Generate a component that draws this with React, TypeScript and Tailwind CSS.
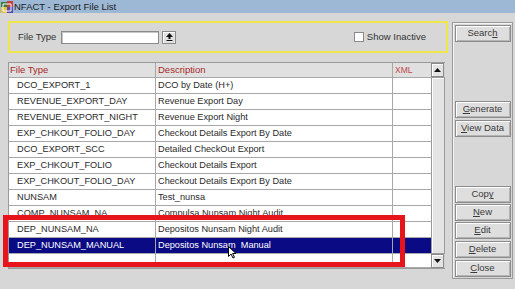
import React from 'react';

const rows = [
  { type: 'DCO_EXPORT_1', desc: 'DCO by Date (H+)' },
  { type: 'REVENUE_EXPORT_DAY', desc: 'Revenue Export Day' },
  { type: 'REVENUE_EXPORT_NIGHT', desc: 'Revenue Export Night' },
  { type: 'EXP_CHKOUT_FOLIO_DAY', desc: 'Checkout Details Export By Date' },
  { type: 'DCO_EXPORT_SCC', desc: 'Detailed CheckOut Export' },
  { type: 'EXP_CHKOUT_FOLIO', desc: 'Checkout Details Export' },
  { type: 'EXP_CHKOUT_FOLIO_DAY', desc: 'Checkout Details Export By Date' },
  { type: 'NUNSAM', desc: 'Test_nunsa' },
  { type: 'COMP_NUNSAM_NA', desc: 'Compulsa Nunsam Night Audit' },
  { type: 'DEP_NUNSAM_NA', desc: 'Depositos Nunsam Night Audit' },
  { type: 'DEP_NUNSAM_MANUAL', desc: 'Depositos Nunsam  Manual', selected: true },
  { type: '', desc: '' },
];

function WinButton({ pre, key1, post, className = '' }: { pre?: string; key1: string; post?: string; className?: string }) {
  return (
    <div
      className={
        'h-[17px] w-[56px] bg-[#dedede] border border-[#8c8c8c] shadow-[inset_1px_1px_0_#ffffff,inset_-1px_-1px_0_#b4b4b4] flex items-center justify-center text-[9.5px] text-[#3a3a3a] ' +
        className
      }
    >
      <span>
        {pre}
        <u>{key1}</u>
        {post}
      </span>
    </div>
  );
}

function ArrowBox({ dir }: { dir: 'up' | 'down' }) {
  return (
    <div className="h-[14px] w-[13px] bg-[#e4e4e4] border border-[#8c8c8c] shadow-[inset_1px_1px_0_#ffffff] flex items-center justify-center">
      <svg width="7" height="4" viewBox="0 0 7 4">
        {dir === 'up' ? <polygon points="0,4 7,4 3.5,0" fill="#111" /> : <polygon points="0,0 7,0 3.5,4" fill="#111" />}
      </svg>
    </div>
  );
}

export default function App() {
  return (
    <div
      className="relative w-[515px] h-[289px] overflow-hidden bg-[#d7d7d7] text-[#2a2a2a]"
      style={{ fontFamily: '"Liberation Sans", Arial, sans-serif' }}
    >
      {/* Title bar */}
      <div className="h-[13px] bg-[#9db8d4] flex items-center">
        <svg width="13" height="12" viewBox="0 0 13 12" className="ml-[1px]">
          <rect x="0" y="1" width="6" height="5" fill="#3a7a3a" />
          <rect x="6" y="0" width="6" height="6" fill="#c84040" />
          <rect x="0" y="6" width="6" height="6" fill="#e8c040" />
          <rect x="6" y="6" width="6" height="6" fill="#5a4ab0" />
          <path d="M2 3 L10 3 L10 10 L2 10 Z" fill="none" stroke="#ffffff" strokeWidth="1" />
        </svg>
        <span className="text-[9.5px] text-[#1c1c1c] leading-none">NFACT - Export File List</span>
      </div>

      <div className="flex">
        {/* Left area */}
        <div className="ml-[8px] mt-[8px] w-[440px]">
          {/* Filter box */}
          <div className="h-[32px] border-[2.5px] border-[#efe64c] flex items-center">
            <span className="ml-[8px] text-[9.5px] text-[#333]">File Type</span>
            <div className="ml-[5px] h-[13px] w-[98px] bg-white border border-[#8a8a8a] shadow-[inset_1px_1px_0_#c8c8c8]" />
            <div className="ml-[3px] h-[13px] w-[14px] bg-[#e2e2e2] border border-[#8a8a8a] shadow-[inset_1px_1px_0_#ffffff] flex items-center justify-center">
              <svg width="7" height="8" viewBox="0 0 7 8">
                <polygon points="3.5,0 7,4 0,4" fill="#111" />
                <rect x="2.5" y="4" width="2" height="2" fill="#111" />
                <rect x="0.5" y="7" width="6" height="1" fill="#111" />
              </svg>
            </div>
            <div className="ml-auto mr-[20px] flex items-center">
              <div className="h-[10px] w-[10px] bg-white border border-[#8a8a8a]" />
              <span className="ml-[3px] text-[9.5px] text-[#333]">Show Inactive</span>
            </div>
          </div>

          {/* Grid */}
          <div className="mt-[9px] w-[437px] flex border border-[#9a9a9a] border-r-0">
            <div className="w-[423px]">
              <div className="h-[15px] flex bg-[#e0e0e0] border-b border-[#a8a8a8] text-[9.5px] text-[#a82828]">
                <div className="w-[147px] border-r border-[#a8a8a8] pl-[1px] flex items-center">File Type</div>
                <div className="w-[237px] border-r border-[#a8a8a8] pl-[2px] flex items-center">Description</div>
                <div className="w-[38px] pl-[2px] flex items-center text-[#c04848] text-[8.5px]">XML</div>
              </div>
              {rows.map((r, i) => (
                <div
                  key={i}
                  className={
                    'flex border-b border-[#a8a8a8] text-[9.2px] ' +
                    (i === rows.length - 1 ? 'h-[14px] ' : 'h-[16px] ') +
                    (r.selected ? 'bg-[#0a0a84] text-white' : 'bg-white text-[#2a2a2a]')
                  }
                >
                  <div className="w-[147px] border-r border-[#a8a8a8] pl-[8px] flex items-center whitespace-pre">{r.type}</div>
                  <div className="w-[237px] border-r border-[#a8a8a8] pl-[2px] flex items-center whitespace-pre">{r.desc}</div>
                  <div className="w-[38px]" />
                </div>
              ))}
            </div>
            {/* Scrollbar */}
            <div className="w-[14px] flex flex-col bg-[#d0d0d0]">
              <ArrowBox dir="up" />
              <div className="flex-1 bg-[#e4e4e4] border border-[#9a9a9a] shadow-[inset_1px_1px_0_#ffffff]" />
              <ArrowBox dir="down" />
            </div>
          </div>
        </div>

        {/* Right button panel */}
        <div className="ml-[4px] mt-[9px] h-[257px] w-[61px] border border-[#9a9a9a] shadow-[inset_1px_1px_0_#f4f4f4] flex flex-col items-center pt-[2px]">
          <WinButton pre="Searc" key1="h" />
          <WinButton key1="G" post="enerate" className="mt-[59px]" />
          <WinButton key1="V" post="iew Data" className="mt-[2px]" />
          <WinButton pre="Cop" key1="y" className="mt-[49px]" />
          <WinButton key1="N" post="ew" className="mt-[1px]" />
          <WinButton key1="E" post="dit" className="mt-[1px]" />
          <WinButton key1="D" post="elete" className="mt-[2px]" />
          <WinButton key1="C" post="lose" className="mt-[2px]" />
        </div>
      </div>

      {/* Red highlight annotation */}
      <div className="absolute left-[3px] top-[215px] w-[402px] h-[52px] border-[5px] border-[#e8141c]" />

      {/* Mouse cursor */}
      <svg className="absolute left-[228px] top-[246px]" width="9" height="13" viewBox="0 0 9 13">
        <path d="M0.5 0.5 L0.5 10.5 L3 8 L5 12 L6.5 11.3 L4.6 7.5 L8 7.5 Z" fill="#ffffff" stroke="#000000" strokeWidth="1" />
      </svg>
    </div>
  );
}
